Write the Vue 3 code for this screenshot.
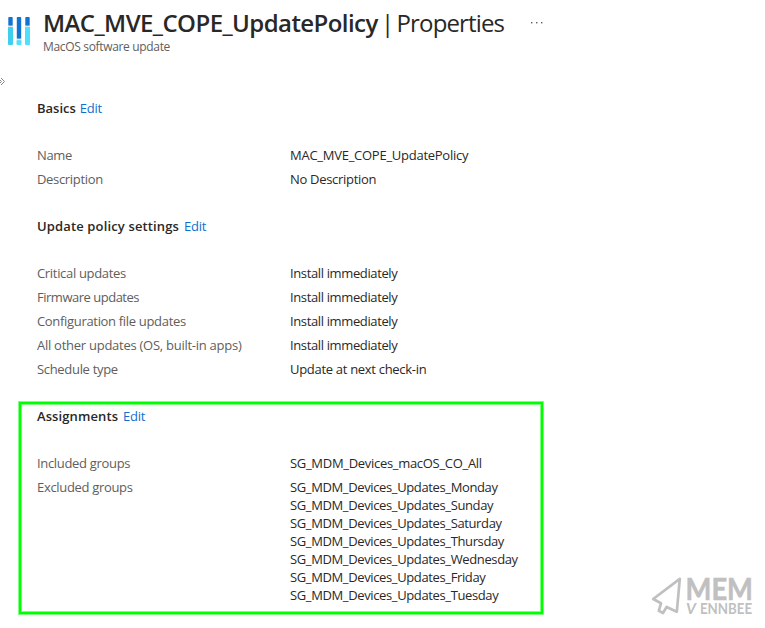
<script setup>
const sections = [
  {
    title: 'Basics',
    key: 'basics',
    rows: [
      { label: 'Name', values: ['MAC_MVE_COPE_UpdatePolicy'], fit: 'wide' },
      { label: 'Description', values: ['No Description'], fit: 'loose' },
    ],
  },
  {
    title: 'Update policy settings',
    key: 'settings',
    rows: [
      { label: 'Critical updates', values: ['Install immediately'] },
      { label: 'Firmware updates', values: ['Install immediately'], labelFit: 'tight' },
      { label: 'Configuration file updates', values: ['Install immediately'] },
      { label: 'All other updates (OS, built-in apps)', values: ['Install immediately'], labelFit: 'wide' },
      { label: 'Schedule type', values: ['Update at next check-in'], fit: 'loose' },
    ],
  },
  {
    title: 'Assignments',
    key: 'assignments',
    highlighted: true,
    rows: [
      { label: 'Included groups', values: ['SG_MDM_Devices_macOS_CO_All'], fit: 'loose' },
      {
        label: 'Excluded groups',
        values: ['Monday', 'Sunday', 'Saturday', 'Thursday', 'Wednesday', 'Friday', 'Tuesday'].map(
          (day) => `SG_MDM_Devices_Updates_${day}`,
        ),
      },
    ],
  },
]
</script>

<template>
  <div class="page">
    <header class="header">
      <svg class="logo" width="24" height="30" viewBox="0 0 24 30">
        <rect x="0" y="10" width="5" height="19" rx="1" fill="#3fcfee" />
        <rect x="0.3" y="1" width="4.4" height="9" rx="0.8" fill="#1273d1" />
        <rect x="0" y="9.6" width="5" height="1.5" fill="#e2e6ea" />
        <rect x="8.5" y="24" width="5" height="5" rx="1" fill="#50e0fa" />
        <rect x="8.8" y="1" width="4.4" height="22" rx="0.8" fill="#1273d1" />
        <rect x="8.5" y="22.6" width="5" height="1.5" fill="#e2e6ea" />
        <rect x="17" y="10" width="5" height="19" rx="1" fill="#50e0fa" />
        <rect x="17.3" y="1" width="4.4" height="9" rx="0.8" fill="#1273d1" />
        <rect x="17" y="9.6" width="5" height="1.5" fill="#e2e6ea" />
      </svg>
      <div class="heading">
        <h1 class="title">
          <span class="name">MAC_MVE_COPE_UpdatePolicy</span>
          <span class="divider">|</span>
          <span class="view">Properties</span>
        </h1>
        <p class="subtitle">MacOS software update</p>
      </div>
      <svg class="more" width="14" height="4" viewBox="0 0 14 4" fill="#605e5c">
        <rect x="0" y="1" width="1.4" height="1.4" />
        <rect x="5" y="1" width="1.4" height="1.4" />
        <rect x="10" y="1" width="1.4" height="1.4" />
      </svg>
    </header>

    <div class="expander">
      <svg width="6" height="9" viewBox="0 0 6 9" fill="none" stroke="#8a8886" stroke-width="1">
        <path d="M-2 1 L1.5 4.5 L-2 8 M1 1 L4.5 4.5 L1 8" />
      </svg>
    </div>

    <main class="sections">
      <section
        v-for="section in sections"
        :key="section.key"
        class="section"
        :class="[section.key, { highlighted: section.highlighted }]"
      >
        <h2 class="section-head">
          <span class="section-title">{{ section.title }}</span>
          <a class="edit">Edit</a>
        </h2>
        <dl v-for="row in section.rows" :key="row.label" class="row">
          <dt class="label" :class="row.labelFit">{{ row.label }}</dt>
          <dd class="values" :class="row.fit">
            <div v-for="value in row.values" :key="value">{{ value }}</div>
          </dd>
        </dl>
      </section>
    </main>

    <svg class="watermark" width="108" height="48" viewBox="0 0 108 48" fill="#c0c0c0">
      <path
        d="M28.8 2.8 L2.2 23 L10 27.3 L7.8 34.8 L12 37 L15.6 31 L25.8 35.8 Z"
        fill="none"
        stroke="#c0c0c0"
        stroke-width="2.7"
        stroke-linejoin="round"
      />
      <text class="brand heavy" x="34.5" y="24.3" font-size="30.5" textLength="67.5" lengthAdjust="spacingAndGlyphs">MEM</text>
      <text class="brand slanted" x="35" y="38.3" font-size="16" textLength="10" lengthAdjust="spacingAndGlyphs">V</text>
      <text class="brand" x="49" y="38.3" font-size="16" textLength="52" lengthAdjust="spacingAndGlyphs">ENNBEE</text>
    </svg>
  </div>
</template>

<style>
body {
  background: #fff;
}
</style>

<style scoped>
.page {
  position: relative;
  box-sizing: border-box;
  width: 765px;
  height: 628px;
  overflow: hidden;
  background: #fff;
  color: #292827;
  font-family: "Open Sans", "Noto Sans", sans-serif;
  font-size: 13px;
  line-height: 18px;
}
.header {
  display: flex;
  height: 75px;
  padding-left: 8px;
}
.logo {
  flex: none;
  margin-top: 16px;
}
.heading {
  width: 462px;
  margin-left: 11px;
}
.title {
  display: flex;
  margin: 7px 0 0;
  font-size: 24px;
  line-height: 32px;
  font-weight: 600;
  white-space: nowrap;
}
.name {
  width: 338px;
  letter-spacing: -0.57px;
}
.divider {
  width: 15.5px;
  font-weight: 400;
}
.view {
  font-weight: 400;
  letter-spacing: -0.85px;
}
.subtitle {
  margin: 0;
  font-size: 12px;
  line-height: 16px;
  letter-spacing: -0.33px;
  color: #605e5c;
}
.more {
  margin: 21px 0 0 26px;
}
.expander {
  display: flex;
  height: 24px;
  padding-top: 2px;
  box-sizing: border-box;
}
.sections {
  display: flex;
  flex-direction: column;
  gap: 26px;
  padding-left: 37px;
}
.section-head {
  display: flex;
  gap: 5px;
  margin: 0 0 26px;
  font-size: 13px;
  line-height: 18px;
  font-weight: 600;
}
.basics .section-head {
  gap: 4px;
}
.settings .section-title {
  letter-spacing: 0.14px;
}
.assignments .section-title {
  letter-spacing: 0.1px;
}
.edit {
  color: #0f6fcf;
  font-weight: 400;
  letter-spacing: -0.25px;
}
.row {
  display: flex;
  margin: 0;
  padding: 3px 0;
}
.label {
  width: 253px;
  color: #605e5c;
  letter-spacing: -0.32px;
}
.values {
  margin: 0;
  letter-spacing: -0.37px;
}
.loose {
  letter-spacing: -0.3px;
}
.wide {
  letter-spacing: -0.26px;
}
.tight {
  letter-spacing: -0.49px;
}
.highlighted {
  width: 502px;
  margin: -5px 0 0 -18px;
  padding: 3px 2px 5px 16px;
  border: 2px solid #00ff00;
  box-shadow:
    0 0 0 1px rgba(0, 255, 0, 0.5),
    inset 0 0 0 1px rgba(0, 255, 0, 0.5);
}
.watermark {
  position: absolute;
  left: 651px;
  top: 576px;
}
.brand {
  font-family: Lato, sans-serif;
  font-weight: 700;
}
.heavy {
  stroke: #c0c0c0;
  stroke-width: 0.5px;
}
.slanted {
  font-style: italic;
}
</style>
